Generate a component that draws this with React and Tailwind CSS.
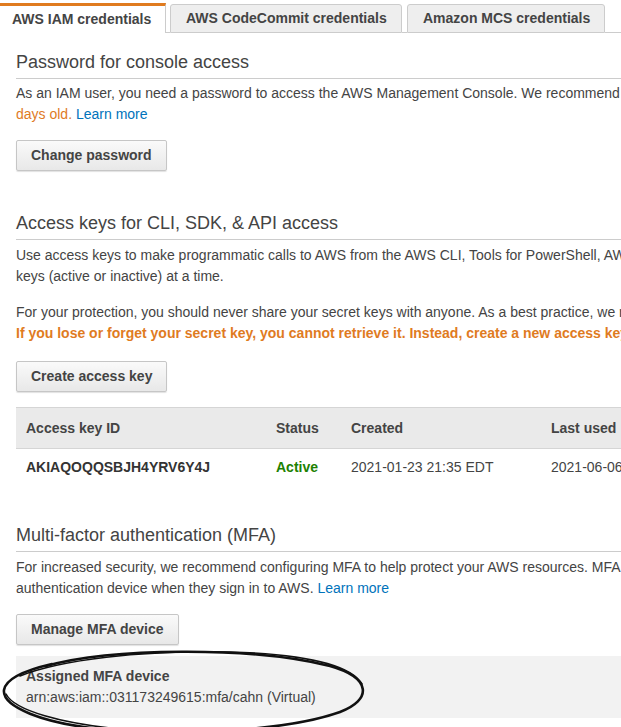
import React from "react";

const font = { fontFamily: '"Liberation Sans", Arial, Helvetica, sans-serif' };

function Btn({ children, className = "" }) {
  return (
    <div
      className={
        "inline-flex h-[31px] items-center rounded-[2px] border border-[#c6c6c6] bg-gradient-to-b from-[#fafafa] to-[#e8e8e8] px-[14px] text-[14px] font-bold text-[#444] shadow-[0_1px_1px_rgba(0,0,0,0.12)] " +
        className
      }
    >
      {children}
    </div>
  );
}

function Heading({ children, className = "" }) {
  return (
    <div className={"border-b border-[#ccc] pb-[4px] text-[18px] leading-[24px] text-[#444] " + className}>
      {children}
    </div>
  );
}

export default function App() {
  return (
    <div className="relative h-[727px] w-[621px] overflow-hidden bg-white text-[#444]" style={font}>
      {/* Tabs */}
      <div className="flex w-[1000px] items-end pt-[3px]">
        <div className="flex h-[30px] w-[166px] items-center border-t-[3px] border-r border-t-[#e07b1f] border-r-[#ccc] bg-white pl-[12px] text-[14px] font-bold text-[#444]">
          AWS IAM credentials
        </div>
        <div className="w-[4px] self-stretch border-b border-[#ccc]" />
        <div className="flex h-[29px] w-[232px] items-center rounded-t-[3px] border border-[#ccc] bg-[#eeeeee] pl-[15px] text-[14px] font-bold text-[#444]">
          AWS CodeCommit credentials
        </div>
        <div className="w-[5px] self-stretch border-b border-[#ccc]" />
        <div className="flex h-[29px] w-[198px] items-center rounded-t-[3px] border border-[#ccc] bg-[#eeeeee] pl-[15px] text-[14px] font-bold text-[#444]">
          Amazon MCS credentials
        </div>
        <div className="flex-1 self-stretch border-b border-[#ccc]" />
      </div>

      <div className="w-[1000px] pl-[16px] text-[14px] leading-[21px]">
        {/* Password */}
        <Heading className="mt-[17px]">Password for console access</Heading>
        <div className="mt-[4px] whitespace-nowrap">
          <div>
            As an IAM user, you need a password to access the AWS Management Console. We recommend that you change your
            password regularly. <span className="text-[#e07b1f]">Your password is 141</span>
          </div>
          <div>
            <span className="text-[#e07b1f]">days old.</span> <span className="text-[#0073bb]">Learn more</span>
          </div>
        </div>
        <Btn className="mt-[15px]">Change password</Btn>

        {/* Access keys */}
        <Heading className="mt-[40px]">Access keys for CLI, SDK, &amp; API access</Heading>
        <div className="mt-[5px] whitespace-nowrap">
          <div>
            Use access keys to make programmatic calls to AWS from the AWS CLI, Tools for PowerShell, AWS SDKs, or direct AWS
            API calls. You can have a maximum of two access
          </div>
          <div>keys (active or inactive) at a time.</div>
          <div className="mt-[15px]">
            For your protection, you should never share your secret keys with anyone. As a best practice, we recommend
            frequent key rotation.
          </div>
          <div className="font-bold text-[#e07b1f]">
            If you lose or forget your secret key, you cannot retrieve it. Instead, create a new access key and make the old
            key inactive.
          </div>
        </div>
        <Btn className="mt-[17px]">Create access key</Btn>

        {/* Table */}
        <div className="mt-[15px]">
          <div className="flex h-[42px] items-center border-t border-b border-[#d5d5d5] bg-[#eaeaea] font-bold text-[#444]">
            <div className="w-[260px] pl-[10px]">Access key ID</div>
            <div className="w-[75px]">Status</div>
            <div className="w-[200px]">Created</div>
            <div className="w-[200px]">Last used</div>
          </div>
          <div className="flex h-[36px] items-center">
            <div className="w-[260px] pl-[10px] font-bold text-[#333]">AKIAQOQQSBJH4YRV6Y4J</div>
            <div className="w-[75px] font-bold text-[#1d8102]">Active</div>
            <div className="w-[200px]">2021-01-23 21:35 EDT</div>
            <div className="w-[200px]">2021-06-06 19:12 EDT</div>
          </div>
        </div>

        {/* MFA */}
        <Heading className="mt-[38px]">Multi-factor authentication (MFA)</Heading>
        <div className="mt-[5px] whitespace-nowrap">
          <div>
            For increased security, we recommend configuring MFA to help protect your AWS resources. MFA adds extra security
            because it requires users to type a unique
          </div>
          <div>
            authentication device when they sign in to AWS. <span className="text-[#0073bb]">Learn more</span>
          </div>
        </div>
        <Btn className="mt-[15px]">Manage MFA device</Btn>
        <div className="mt-[11px] h-[62px] bg-[#f2f2f2] pl-[10px] pt-[10px]">
          <div className="font-bold text-[#444]">Assigned MFA device</div>
          <div>arn:aws:iam::031173249615:mfa/cahn (Virtual)</div>
        </div>
      </div>

      {/* Hand-drawn ellipse */}
      <svg className="pointer-events-none absolute left-0 top-[640px]" width="380" height="100" viewBox="0 0 380 100">
        <path
          d="M 46 26 C 110 8, 250 6, 330 26 C 372 38, 372 60, 340 72 C 290 90, 190 96, 110 90 C 40 84, 2 66, 4 50 C 6 38, 26 30, 52 24"
          fill="none"
          stroke="#111"
          strokeWidth="2.6"
          strokeLinecap="round"
        />
        <path
          d="M 20 36 C 60 20, 140 10, 230 12 C 300 14, 350 24, 362 44"
          fill="none"
          stroke="#111"
          strokeWidth="1.6"
          strokeLinecap="round"
        />
        <path
          d="M 6 54 C 14 70, 60 84, 130 90"
          fill="none"
          stroke="#111"
          strokeWidth="1.6"
          strokeLinecap="round"
        />
      </svg>
    </div>
  );
}
